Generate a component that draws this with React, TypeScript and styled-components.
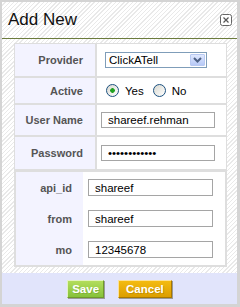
import React from "react";
import styled, { createGlobalStyle } from "styled-components";

const GlobalStyle = createGlobalStyle`
  html, body {
    margin: 0;
    padding: 0;
    background: #fff;
  }
  body {
    font-family: "Liberation Sans", Arial, sans-serif;
  }
`;

const Dialog = styled.div`
  width: 240px;
  height: 307px;
  box-sizing: border-box;
  border-style: solid;
  border-color: #d4d4d4;
  border-width: 2px 3px 3px 2px;
  background: repeating-linear-gradient(135deg, #ffffff 0 2px, #e9e9e9 2px 3px);
  display: flex;
  flex-direction: column;
`;

const Header = styled.div`
  height: 36px;
  display: flex;
  align-items: center;
  justify-content: space-between;
  padding: 0 5px 0 6px;
  border-bottom: 1px solid #6b7b3c;
`;

const Title = styled.h2`
  margin: 0;
  font-size: 17px;
  font-weight: normal;
  color: #111;
`;

const CloseButton = styled.button`
  width: 12px;
  height: 12px;
  padding: 0;
  border: none;
  background: transparent;
  display: block;
  cursor: pointer;
`;

const Body = styled.div`
  padding: 4px 10px 0 12px;
`;

const Form = styled.div`
  display: grid;
  grid-template-columns: 80px 1fr;
  grid-template-rows: 32px 25px 30px 32px 95px;
  gap: 2px;
  background: #dedede;
  border: 1px solid #dedede;
`;

const Label = styled.label<{ $pad?: number }>`
  background: #f3f3ff;
  display: flex;
  align-items: center;
  justify-content: flex-end;
  padding-right: ${(p) => p.$pad ?? 12}px;
  font-size: 11px;
  font-weight: bold;
  color: #555;
`;

const Value = styled.div<{ $pad?: number }>`
  background: #fff;
  display: flex;
  align-items: center;
  padding-left: ${(p) => p.$pad ?? 4}px;
  font-size: 11.5px;
  color: #000;
`;

const SelectBox = styled.div`
  margin-left: 2px;
  width: 102px;
  height: 16px;
  box-sizing: border-box;
  border: 1px solid #7f9db9;
  background: #fff;
  display: flex;
`;

const Select = styled.select`
  appearance: none;
  border: none;
  outline: none;
  background: transparent;
  flex: 1;
  min-width: 0;
  padding: 0 0 0 3px;
  font: 11.5px "Liberation Sans", Arial, sans-serif;
  color: #000;
`;

const SelectArrow = styled.span`
  width: 15px;
  margin: 1px;
  box-sizing: border-box;
  border: 1px solid #b8c9f2;
  border-radius: 1px;
  background: linear-gradient(#dfe8fe, #b7c9f7);
  display: flex;
  align-items: center;
  justify-content: center;
`;

const RadioLabel = styled.label`
  display: flex;
  align-items: center;
  gap: 6px;
  margin-right: 9px;
  font-size: 11.5px;
  color: #000;
`;

const Radio = styled.input`
  appearance: none;
  margin: 0;
  width: 13px;
  height: 13px;
  box-sizing: border-box;
  border-radius: 50%;
  border: 1px solid #1c5180;
  background: linear-gradient(135deg, #d8d8d0, #ffffff);

  &:checked {
    background: radial-gradient(circle, #21a121 0 2px, transparent 2.6px),
      linear-gradient(135deg, #d8d8d0, #ffffff);
  }
`;

const TextInput = styled.input<{ $w: number; $h: number }>`
  width: ${(p) => p.$w}px;
  height: ${(p) => p.$h}px;
  box-sizing: border-box;
  border: 1px solid #a5a5a5;
  padding: 0 6px;
  font: 11.5px "Liberation Sans", Arial, sans-serif;
  color: #000;
  background: #fff;
  outline: none;
`;

const Extra = styled.div`
  grid-column: 1 / -1;
  display: grid;
  grid-template-columns: 67px 1fr;
  grid-auto-rows: 31px;
  background: #fff;
  border: 1px solid #dedede;
`;

const Footer = styled.div`
  margin-top: 6px;
  height: 31px;
  background: #e1e4fb;
  display: flex;
  justify-content: center;
  align-items: center;
  gap: 14px;
`;

const Button = styled.button<{ $variant: "save" | "cancel" }>`
  height: 18px;
  padding: 0 ${(p) => (p.$variant === "save" ? 4 : 7)}px;
  font: bold 11.5px "Liberation Sans", Arial, sans-serif;
  color: #fff;
  text-shadow: 1px 1px 0 rgba(0, 0, 0, 0.15);
  border: 1px solid;
  box-shadow: 1px 1px 0 #9a9a9a;
  cursor: pointer;
  background: ${(p) =>
    p.$variant === "save"
      ? "linear-gradient(#b3dd5c, #86c23a)"
      : "linear-gradient(#f4bb10, #dc9e00)"};
  border-color: ${(p) =>
    p.$variant === "save"
      ? "#e3f2c2 #6f9a2a #6f9a2a #e3f2c2"
      : "#fbe19a #a87800 #a87800 #fbe19a"};
`;

const CloseIcon = () => (
  <svg width="12" height="12" viewBox="0 0 12 12">
    <rect x="0.5" y="0.5" width="11" height="11" rx="2" fill="#fff" stroke="#666" />
    <path d="M3.5 3.5 L8.5 8.5 M8.5 3.5 L3.5 8.5" stroke="#555" strokeWidth="1.2" />
  </svg>
);

const Chevron = () => (
  <svg width="9" height="6" viewBox="0 0 9 6">
    <path d="M1 1 L4.5 4.5 L8 1" fill="none" stroke="#4d6185" strokeWidth="2" />
  </svg>
);

const extras = [
  { name: "api_id", value: "shareef" },
  { name: "from", value: "shareef" },
  { name: "mo", value: "12345678" },
];

export default function App() {
  return (
    <>
      <GlobalStyle />
      <Dialog>
        <Header>
          <Title>Add New</Title>
          <CloseButton aria-label="Close">
            <CloseIcon />
          </CloseButton>
        </Header>
        <Body>
          <Form>
            <Label>Provider</Label>
            <Value $pad={6}>
              <SelectBox>
                <Select defaultValue="clickatell">
                  <option value="clickatell">ClickATell</option>
                </Select>
                <SelectArrow>
                  <Chevron />
                </SelectArrow>
              </SelectBox>
            </Value>

            <Label>Active</Label>
            <Value $pad={9}>
              <RadioLabel>
                <Radio type="radio" name="active" defaultChecked />
                Yes
              </RadioLabel>
              <RadioLabel>
                <Radio type="radio" name="active" />
                No
              </RadioLabel>
            </Value>

            <Label>User Name</Label>
            <Value>
              <TextInput $w={114} $h={16} defaultValue="shareef.rehman" />
            </Value>

            <Label>Password</Label>
            <Value>
              <TextInput $w={114} $h={16} type="password" defaultValue="shareefpass1" />
            </Value>

            <Extra>
              {extras.map((f) => (
                <React.Fragment key={f.name}>
                  <Label $pad={11}>{f.name}</Label>
                  <Value $pad={5}>
                    <TextInput $w={125} $h={17} defaultValue={f.value} />
                  </Value>
                </React.Fragment>
              ))}
            </Extra>
          </Form>
        </Body>
        <Footer>
          <Button $variant="save">Save</Button>
          <Button $variant="cancel">Cancel</Button>
        </Footer>
      </Dialog>
    </>
  );
}
